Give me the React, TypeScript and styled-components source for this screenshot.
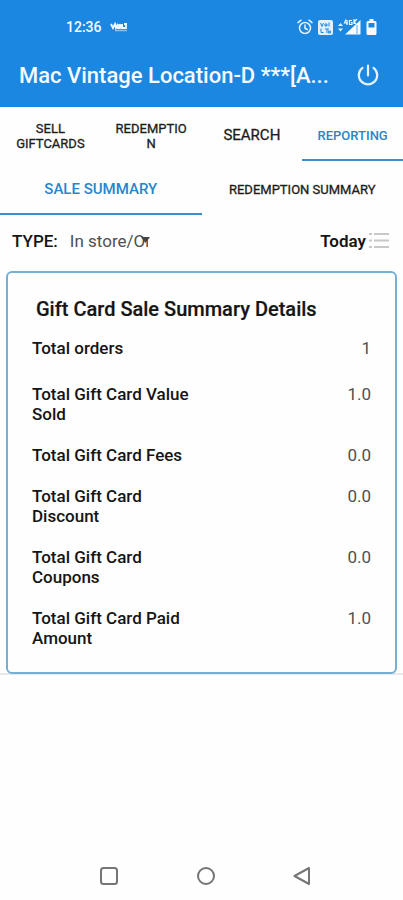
import React, { useState } from "react";
import styled, { createGlobalStyle } from "styled-components";

const GlobalStyle = createGlobalStyle`
  * { box-sizing: border-box; }
  body { margin: 0; background: #fefefe; }
  button, select { font-family: inherit; border: 0; padding: 0; margin: 0; background: none; color: inherit; cursor: pointer; }
`;

const Screen = styled.div`
  min-height: 100vh;
  display: flex;
  flex-direction: column;
  background: #fefefe;
  color: #151515;
  font-family: Roboto, "Liberation Sans", sans-serif;
`;

const Top = styled.header`
  background: #1c87e0;
  color: #f4faff;
`;

const StatusBar = styled.div`
  height: 48px;
  padding: 6px 26px 0 66px;
  display: flex;
  align-items: center;
  justify-content: space-between;
`;

const StatusGroup = styled.div<{ $gap: number }>`
  display: flex;
  align-items: center;
  gap: ${(p) => p.$gap}px;
`;

const Clock = styled.time`
  font-size: 14px;
  line-height: 20px;
  font-weight: 500;
`;

const TitleBar = styled.div`
  height: 59px;
  padding: 0 22px 3px 19px;
  display: flex;
  align-items: center;
  gap: 24px;
`;

const Title = styled.h1`
  flex: 1;
  min-width: 0;
  margin: 0;
  font-size: 22px;
  line-height: 28px;
  font-weight: 500;
  overflow: hidden;
  white-space: nowrap;
  text-overflow: ellipsis;
`;

const IconButton = styled.button`
  display: flex;
`;

const Tabs = styled.div<{ $columns: number }>`
  display: grid;
  grid-template-columns: repeat(${(p) => p.$columns}, 1fr);
  height: 54px;
`;

const Tab = styled.button<{ $active: boolean; $size: number }>`
  min-width: 0;
  padding: 5px 12px 0;
  font-size: ${(p) => p.$size}px;
  line-height: 15px;
  font-weight: ${(p) => (p.$active ? 500 : 400)};
  -webkit-text-stroke: ${(p) => (p.$active ? "0" : "0.3px")};
  color: ${(p) => (p.$active ? "#2786cc" : "#1c1c1c")};
  border-bottom: 2px solid ${(p) => (p.$active ? "#3b8fcd" : "transparent")};
  overflow-wrap: anywhere;
`;

const Filters = styled.div`
  display: flex;
  align-items: center;
  justify-content: space-between;
  height: 56px;
  padding: 0 13px 4px 12px;
`;

const TypeField = styled.label`
  display: flex;
  align-items: center;
  gap: 12px;
  font-size: 17px;
  line-height: 20px;
  font-weight: 500;
`;

const SelectWrap = styled.span`
  position: relative;
  display: flex;
  width: 84px;
`;

const Select = styled.select`
  appearance: none;
  width: 78px;
  height: 24px;
  font-size: 17px;
  line-height: 24px;
  color: #505050;
  overflow: hidden;
  text-overflow: clip;
`;

const Arrow = styled.svg`
  position: absolute;
  right: 4px;
  top: 8px;
  pointer-events: none;
`;

const DayButton = styled.button`
  display: flex;
  align-items: center;
  gap: 2px;
  font-size: 17px;
  line-height: 20px;
  font-weight: 600;
`;

const Panel = styled.main`
  padding: 0 6px;
  border-bottom: 2px solid #e8e8e8;
`;

const Card = styled.section`
  margin-bottom: -1px;
  padding: 24px 24px 24px;
  border: 2px solid #75b0d4;
  border-radius: 6px;
  background: #fefefe;
`;

const CardTitle = styled.h2`
  margin: 0 0 17px;
  padding-left: 4px;
  font-size: 20px;
  line-height: 24px;
  font-weight: 500;
  -webkit-text-stroke: 0.2px;
`;

const Rows = styled.dl`
  margin: 0;
  display: flex;
  flex-direction: column;
  gap: 21px;
`;

const Row = styled.div`
  display: flex;
  justify-content: space-between;
  font-size: 17px;
  line-height: 20px;
  &:first-child { margin-bottom: 5px; }
`;

const Name = styled.dt`
  width: 50%;
  font-weight: 500;
`;

const Value = styled.dd`
  margin: 0;
  color: #505050;
`;

const NavBar = styled.nav`
  margin-top: auto;
  height: 48px;
  padding: 0 83px 0 91px;
  display: flex;
  align-items: center;
  justify-content: space-between;
`;

const mainTabs = [
  { label: "SELL GIFTCARDS", size: 13 },
  { label: "REDEMPTION", size: 13 },
  { label: "SEARCH", size: 15 },
  { label: "REPORTING", size: 13 },
];

const summaryTabs = [
  { label: "SALE SUMMARY", size: 15 },
  { label: "REDEMPTION SUMMARY", size: 13 },
];

const rows = [
  ["Total orders", "1"],
  ["Total Gift Card Value Sold", "1.0"],
  ["Total Gift Card Fees", "0.0"],
  ["Total Gift Card Discount", "0.0"],
  ["Total Gift Card Coupons", "0.0"],
  ["Total Gift Card Paid Amount", "1.0"],
];

const CarrierMark = () => (
  <svg width="18" height="11" viewBox="0 0 18 11" fill="none" stroke="#f4faff" aria-hidden="true">
    <path d="M1 2l2 4 2-4 1 4 2-4v4h2V2M9 4h4M12 2v4h3M14 2h3M16 2v5" strokeWidth="1.8" />
    <path d="M5 8.500h12" strokeWidth="1.5" opacity=".5" />
  </svg>
);

const AlarmIcon = () => (
  <svg width="16" height="16" viewBox="0 0 16 16" fill="none" stroke="#e3f1fd" strokeWidth="1.5" strokeLinecap="round" aria-hidden="true">
    <circle cx="8" cy="9" r="5.5" />
    <path d="M8 6v3.2l2.2 1.3M1 3.6L4 1.2M15 3.6l-3-2.4" />
  </svg>
);

const VolteIcon = () => (
  <svg width="15" height="15" viewBox="0 0 15 15" aria-hidden="true">
    <rect width="15" height="15" rx="2" fill="#e3f1fd" />
    <path d="M2.5 3l1.5 3.500L5.500 3M7 4h2v2H7zM11 2.500v4M3 8.500v4h2.500M7 9h4M9 9v4M10.500 11h2v2h-2z" fill="none" stroke="#1c87e0" strokeWidth="1" />
  </svg>
);

const SignalIcon = () => (
  <svg width="23" height="16" viewBox="0 0 23 16" aria-hidden="true">
    <path d="M0 7l2.500-3L5 7zM0 9.500L2.500 12.500 5 9.500z" fill="#e3f1fd" />
    <path d="M7 15.500L22.500 1v14.500z" fill="#f4faff" />
    <path d="M19 6v9" stroke="#1c87e0" strokeWidth="1" opacity=".7" />
    <path d="M8 .5L6.500 4H10M9 1v5M14 1.500h-2.500v4H14v-2h-1M16 0v5M19 0l-3 3 2 2" fill="none" stroke="#f4faff" strokeWidth="1.2" />
  </svg>
);

const BatteryIcon = () => (
  <svg width="11" height="16" viewBox="0 0 11 16" aria-hidden="true">
    <path d="M3.500 0h4v2H9a1.500 1.500 0 011.500 1.500v11A1.500 1.500 0 019 16H2A1.500 1.500 0 01.5 14.500v-11A1.500 1.500 0 012 2h1.500z" fill="#f4faff" />
    <path d="M2.500 4h6v4.500h-6z" fill="#1c87e0" />
  </svg>
);

const PowerIcon = () => (
  <svg width="26" height="26" viewBox="0 0 26 26" fill="none" stroke="#e6f3ff" strokeWidth="2.2" strokeLinecap="round" aria-hidden="true">
    <path d="M13 2.500v10M7.500 4.800a9.200 9.200 0 1011 0" />
  </svg>
);

const ListIcon = () => (
  <svg width="22" height="18" viewBox="0 0 22 18" stroke="#c8c8c8" strokeWidth="2" aria-hidden="true">
    <path d="M1 2h3M6 2h15M1 8.500h3M6 8.500h15M1 15h3M6 15h15" />
  </svg>
);

export default function App() {
  const [section, setSection] = useState("REPORTING");
  const [summary, setSummary] = useState("SALE SUMMARY");

  return (
    <>
      <GlobalStyle />
      <Screen>
        <Top>
          <StatusBar>
            <StatusGroup $gap={8}>
              <Clock>12:36</Clock>
              <CarrierMark />
            </StatusGroup>
            <StatusGroup $gap={5}>
              <AlarmIcon />
              <VolteIcon />
              <SignalIcon />
              <BatteryIcon />
            </StatusGroup>
          </StatusBar>
          <TitleBar>
            <Title>Mac Vintage Location-D ***[A...</Title>
            <IconButton aria-label="Log out"><PowerIcon /></IconButton>
          </TitleBar>
        </Top>
        <Tabs $columns={4} role="tablist">
          {mainTabs.map((t) => (
            <Tab key={t.label} role="tab" aria-selected={section === t.label} $active={section === t.label} $size={t.size} onClick={() => setSection(t.label)}>
              {t.label}
            </Tab>
          ))}
        </Tabs>
        <Tabs $columns={2} role="tablist">
          {summaryTabs.map((t) => (
            <Tab key={t.label} role="tab" aria-selected={summary === t.label} $active={summary === t.label} $size={t.size} onClick={() => setSummary(t.label)}>
              {t.label}
            </Tab>
          ))}
        </Tabs>
        <Filters>
          <TypeField>
            TYPE:
            <SelectWrap>
              <Select defaultValue="In store/Online">
                <option>In store/Online</option>
              </Select>
              <Arrow width="9" height="7" viewBox="0 0 9 7" aria-hidden="true">
                <path d="M0 0h9L4.500 6z" fill="#444" />
              </Arrow>
            </SelectWrap>
          </TypeField>
          <DayButton>Today<ListIcon /></DayButton>
        </Filters>
        <Panel>
          <Card>
            <CardTitle>Gift Card Sale Summary Details</CardTitle>
            <Rows>
              {rows.map(([name, value]) => (
                <Row key={name}>
                  <Name>{name}</Name>
                  <Value>{value}</Value>
                </Row>
              ))}
            </Rows>
          </Card>
        </Panel>
        <NavBar>
          <IconButton aria-label="Recent apps">
            <svg width="36" height="24" viewBox="0 0 36 24" fill="none" stroke="#757575" strokeWidth="2"><rect x="10" y="4" width="16" height="16" rx="2.5" /></svg>
          </IconButton>
          <IconButton aria-label="Home">
            <svg width="36" height="24" viewBox="0 0 36 24" fill="none" stroke="#757575" strokeWidth="2"><circle cx="18" cy="12" r="8" /></svg>
          </IconButton>
          <IconButton aria-label="Back">
            <svg width="36" height="24" viewBox="0 0 36 24" fill="none" stroke="#757575" strokeWidth="2" strokeLinejoin="round"><path d="M25 4v16L10.500 12z" /></svg>
          </IconButton>
        </NavBar>
      </Screen>
    </>
  );
}
